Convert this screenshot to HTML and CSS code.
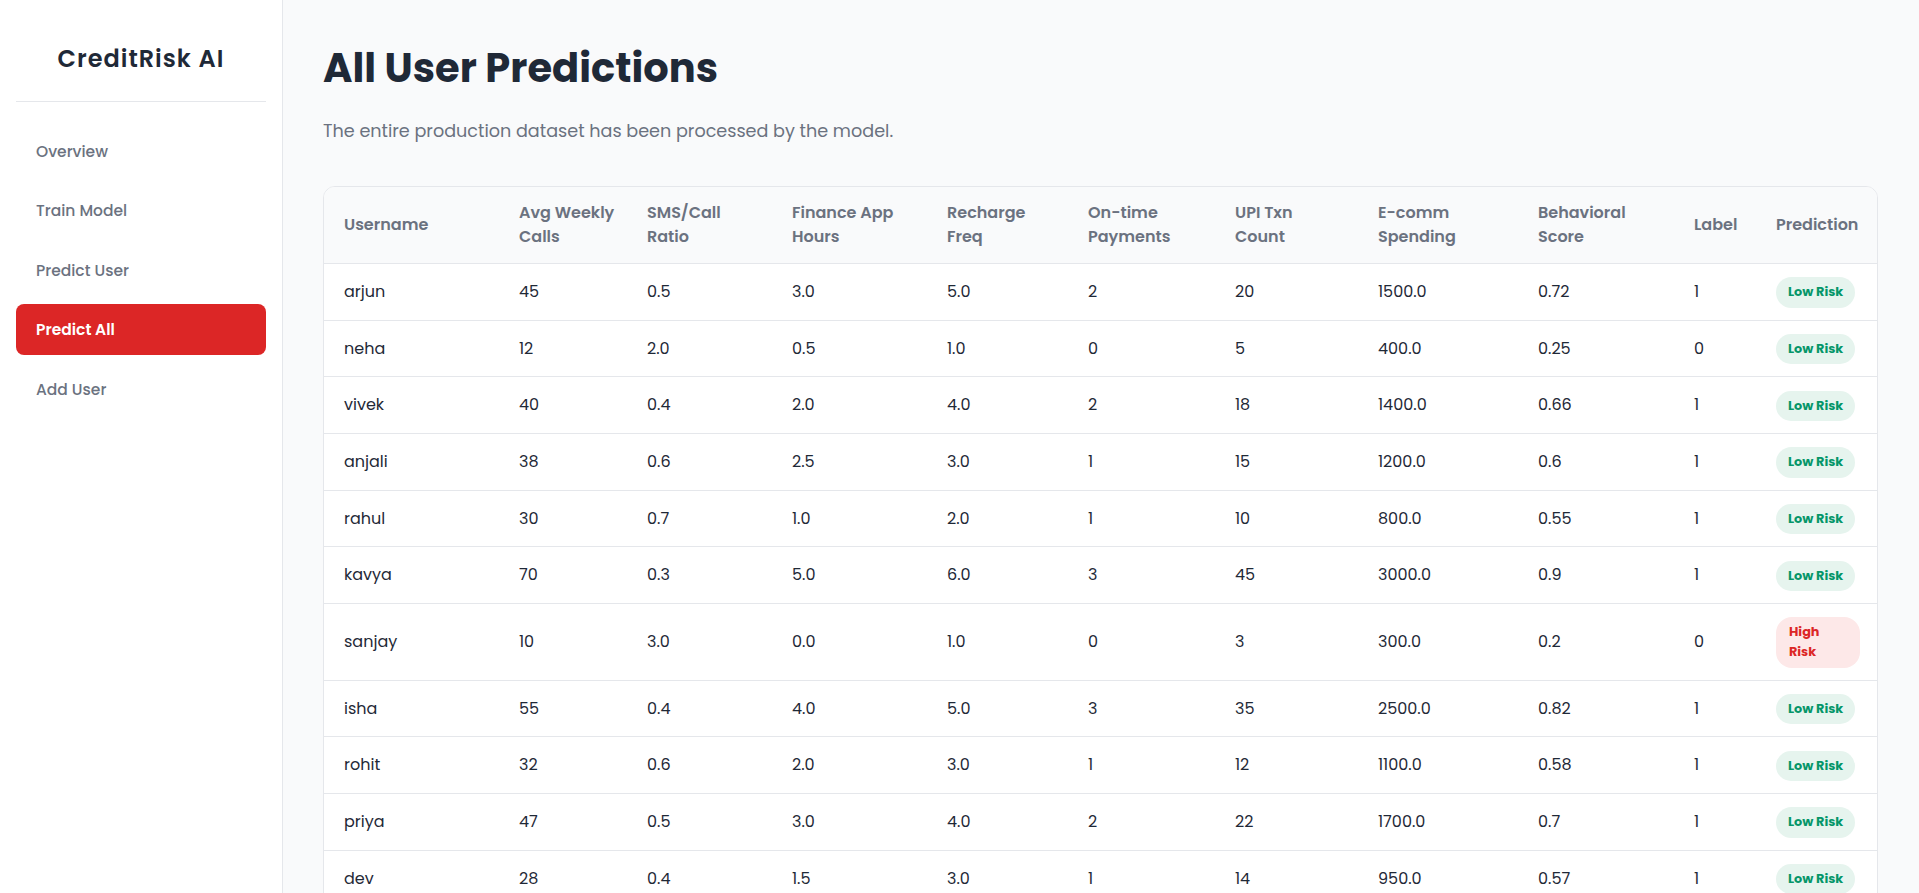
FILE: index.html
```html
<!DOCTYPE html>
<html lang="en">
<head>
<meta charset="utf-8">
<title>CreditRisk AI - All User Predictions</title>
<link rel="stylesheet" href="styles.css">
</head>
<body>
<div class="app">
  <aside class="sidebar">
    <div class="brand">CreditRisk AI</div>
    <nav class="nav">
      <a class="nav-item" href="#">Overview</a>
      <a class="nav-item" href="#">Train Model</a>
      <a class="nav-item" href="#">Predict User</a>
      <a class="nav-item active" href="#">Predict All</a>
      <a class="nav-item" href="#">Add User</a>
    </nav>
  </aside>
  <main class="main">
    <h1 class="title">All User Predictions</h1>
    <p class="subtitle">The entire production dataset has been processed by the model.</p>
    <div class="card">
      <table class="grid">
        <colgroup>
          <col class="c-user"><col class="c-calls"><col class="c-sms"><col class="c-fin"><col class="c-rech"><col class="c-ontime"><col class="c-upi"><col class="c-ecomm"><col class="c-behav"><col class="c-label"><col class="c-pred">
        </colgroup>
        <thead>
          <tr>
            <th>Username</th>
            <th>Avg Weekly<br>Calls</th>
            <th>SMS/Call<br>Ratio</th>
            <th>Finance App<br>Hours</th>
            <th>Recharge<br>Freq</th>
            <th>On-time<br>Payments</th>
            <th>UPI Txn<br>Count</th>
            <th>E-comm<br>Spending</th>
            <th>Behavioral<br>Score</th>
            <th>Label</th>
            <th class="pred">Prediction</th>
          </tr>
        </thead>
        <tbody>
          <tr><td>arjun</td><td>45</td><td>0.5</td><td>3.0</td><td>5.0</td><td>2</td><td>20</td><td>1500.0</td><td>0.72</td><td>1</td><td class="pred"><span class="badge low">Low Risk</span></td></tr>
          <tr><td>neha</td><td>12</td><td>2.0</td><td>0.5</td><td>1.0</td><td>0</td><td>5</td><td>400.0</td><td>0.25</td><td>0</td><td class="pred"><span class="badge low">Low Risk</span></td></tr>
          <tr><td>vivek</td><td>40</td><td>0.4</td><td>2.0</td><td>4.0</td><td>2</td><td>18</td><td>1400.0</td><td>0.66</td><td>1</td><td class="pred"><span class="badge low">Low Risk</span></td></tr>
          <tr><td>anjali</td><td>38</td><td>0.6</td><td>2.5</td><td>3.0</td><td>1</td><td>15</td><td>1200.0</td><td>0.6</td><td>1</td><td class="pred"><span class="badge low">Low Risk</span></td></tr>
          <tr><td>rahul</td><td>30</td><td>0.7</td><td>1.0</td><td>2.0</td><td>1</td><td>10</td><td>800.0</td><td>0.55</td><td>1</td><td class="pred"><span class="badge low">Low Risk</span></td></tr>
          <tr><td>kavya</td><td>70</td><td>0.3</td><td>5.0</td><td>6.0</td><td>3</td><td>45</td><td>3000.0</td><td>0.9</td><td>1</td><td class="pred"><span class="badge low">Low Risk</span></td></tr>
          <tr><td>sanjay</td><td>10</td><td>3.0</td><td>0.0</td><td>1.0</td><td>0</td><td>3</td><td>300.0</td><td>0.2</td><td>0</td><td class="pred"><span class="badge high">High<br>Risk</span></td></tr>
          <tr><td>isha</td><td>55</td><td>0.4</td><td>4.0</td><td>5.0</td><td>3</td><td>35</td><td>2500.0</td><td>0.82</td><td>1</td><td class="pred"><span class="badge low">Low Risk</span></td></tr>
          <tr><td>rohit</td><td>32</td><td>0.6</td><td>2.0</td><td>3.0</td><td>1</td><td>12</td><td>1100.0</td><td>0.58</td><td>1</td><td class="pred"><span class="badge low">Low Risk</span></td></tr>
          <tr><td>priya</td><td>47</td><td>0.5</td><td>3.0</td><td>4.0</td><td>2</td><td>22</td><td>1700.0</td><td>0.7</td><td>1</td><td class="pred"><span class="badge low">Low Risk</span></td></tr>
          <tr><td>dev</td><td>28</td><td>0.4</td><td>1.5</td><td>3.0</td><td>1</td><td>14</td><td>950.0</td><td>0.57</td><td>1</td><td class="pred"><span class="badge low">Low Risk</span></td></tr>
        </tbody>
      </table>
    </div>
  </main>
</div>
</body>
</html>
```
FILE: styles.css
```css
* { box-sizing: border-box; }

html, body {
  margin: 0;
  padding: 0;
  height: 100%;
}

body {
  font-family: "Poppins", "Inter", "Noto Sans", sans-serif;
  color: #1f2937;
  background: #f9fafb;
}

.app {
  display: flex;
  height: 100vh;
  overflow: hidden;
}

/* Sidebar */
.sidebar {
  flex: 0 0 283px;
  background: #ffffff;
  border-right: 1px solid #e5e7eb;
  padding: 0 16px;
}

.brand {
  padding: 41px 0 24px;
  border-bottom: 1px solid #e5e7eb;
  text-align: center;
  font-size: 24px;
  line-height: 36px;
  font-weight: 600;
  letter-spacing: 1px;
  color: #1f2937;
}

.nav {
  display: flex;
  flex-direction: column;
  gap: 8.5px;
  margin-top: 23.5px;
}

.nav-item {
  display: block;
  padding: 14px 20px;
  line-height: 23px;
  font-size: 15.5px;
  font-weight: 500;
  color: #6b7280;
  text-decoration: none;
  border-radius: 8px;
}

.nav-item.active {
  background: #dc2626;
  color: #ffffff;
  font-weight: 600;
}

/* Main */
.main {
  flex: 1 1 auto;
  min-width: 0;
  padding: 44px 41px 40px 40px;
  overflow-y: auto;
  scrollbar-width: none;
}

.title {
  margin: 0;
  font-size: 40px;
  line-height: 48px;
  font-weight: 700;
  color: #1f2937;
}

.subtitle {
  margin: 26px 0 0;
  font-size: 17.6px;
  line-height: 26px;
  color: #6b7280;
}

.card {
  margin-top: 42px;
  background: #ffffff;
  border: 1px solid #e5e7eb;
  border-radius: 12px;
  overflow: hidden;
}

.grid {
  width: 100%;
  table-layout: fixed;
  border-collapse: collapse;
}

.c-user { width: 175px; }
.c-calls { width: 128px; }
.c-sms { width: 145px; }
.c-fin { width: 155px; }
.c-rech { width: 141px; }
.c-ontime { width: 147px; }
.c-upi { width: 143px; }
.c-ecomm { width: 160px; }
.c-behav { width: 156px; }
.c-label { width: 82px; }
.c-pred { width: 121px; }

.grid th {
  background: #f9fafb;
  padding: 14px 8px 14px 20px;
  line-height: 24px;
  font-size: 16px;
  font-weight: 600;
  color: #6b7280;
  text-align: left;
  white-space: nowrap;
  vertical-align: middle;
  border-bottom: 1px solid #e5e7eb;
}

.grid td {
  padding: 13px 8px 12px 20px;
  line-height: 30.67px;
  font-size: 16px;
  color: #1f2937;
  vertical-align: middle;
  border-bottom: 1px solid #e5e7eb;
}

.badge {
  display: block;
  width: fit-content;
  padding: 5px 12px;
  line-height: 20.33px;
  font-size: 12.8px;
  font-weight: 700;
  border-radius: 999px;
}

.badge.low {
  background: #e6f4ee;
  color: #059669;
}

.badge.high {
  min-width: 84px;
  padding: 5px 13px;
  border-radius: 16px;
  background: #fde8e8;
  color: #dc2626;
}
```
